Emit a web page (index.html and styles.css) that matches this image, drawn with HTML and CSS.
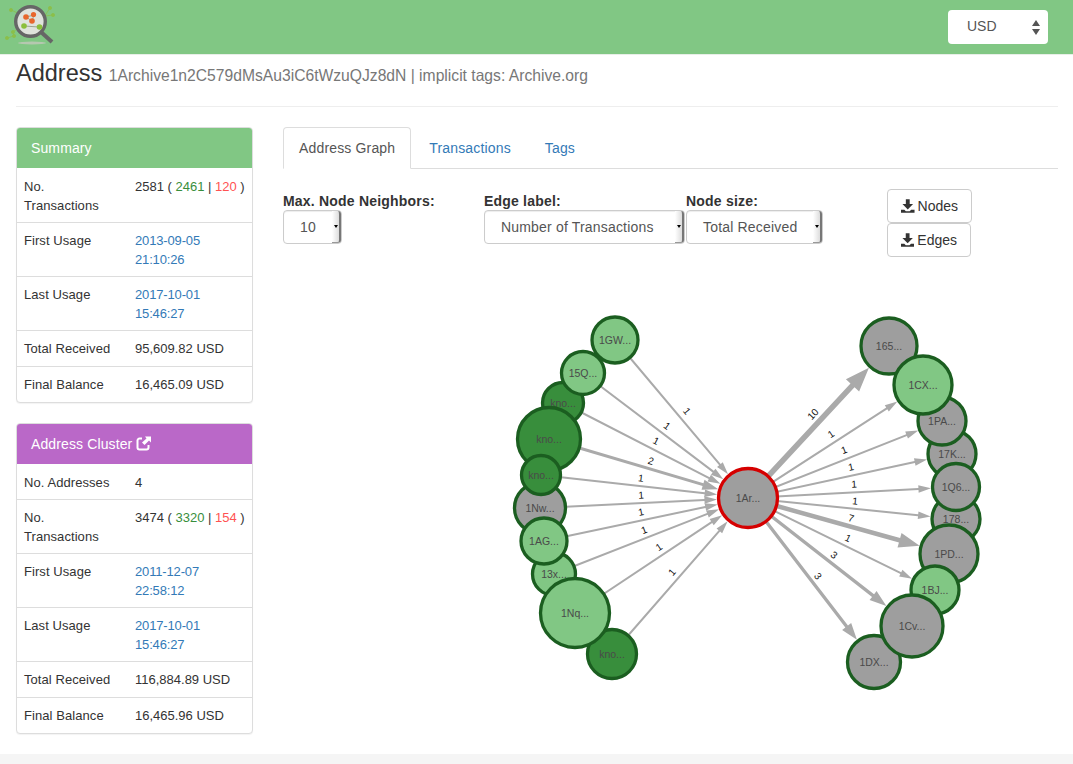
FILE: index.html
```html
<!DOCTYPE html>
<html lang="en">
<head>
    <meta charset="UTF-8">
    <title>Address</title>
    <link rel="stylesheet" href="styles.css">
</head>

<body>
    <div class="topbar">
        <svg class="logo" width="56" height="46" viewBox="0 0 56 46">
            <g stroke="#8bbf4a" stroke-width="0.8" fill="#8bbf4a">
                <path d="M11 10L22 15M50 8L44 17M53 15L45 16M7 38L14 36L13 32L20 27" fill="none"/>
                <circle cx="11" cy="10" r="1.6"/>
                <circle cx="50" cy="8" r="1.6"/>
                <circle cx="53" cy="15" r="1.6"/>
                <circle cx="13" cy="32" r="1.6"/>
                <circle cx="14" cy="36" r="1.6"/>
                <circle cx="7" cy="38" r="1.6"/>
            </g>
            <ellipse cx="32" cy="43" rx="14" ry="1.5" fill="#b5c8b0"/>
            <path d="M41 32L52 42" stroke="#666" stroke-width="4"/>
            <circle cx="30.500" cy="21.500" r="14.800" fill="#dfe3dc" stroke="#666" stroke-width="3.400"/>
            <path d="M26 17L34 15M26 17L32 21M34 15L32 21M24 26L39 27" stroke="#9aa58f" stroke-width="1"/>
            <circle cx="26" cy="17" r="2.8" fill="#e8672c"/>
            <circle cx="33.500" cy="14.500" r="2.6" fill="#e8672c"/>
            <circle cx="32" cy="21" r="2.8" fill="#e8672c"/>
            <circle cx="24" cy="26" r="2.8" fill="#8bbf3a"/>
            <circle cx="39.500" cy="27" r="2.8" fill="#8bbf3a"/>
        </svg>
        <div class="currency">
            <span>USD</span>
            <svg width="8" height="15" viewBox="0 0 8 15">
                <path d="M4 0L8 6H0ZM0 9H8L4 15Z" fill="#555"/>
            </svg>
        </div>
    </div>

    <div class="page">
        <h1 class="page-title">Address <small>1Archive1n2C579dMsAu3iC6tWzuQJz8dN | implicit tags: Archive.org</small></h1>
        <hr class="rule">

        <div class="columns">
            <div class="sidebar">
                <div class="panel">
                    <div class="panel-head green">Summary</div>
                    <table class="info">
                        <tr><td>No. Transactions</td><td>2581 ( <span class="in">2461</span> | <span class="out">120</span> )</td></tr>
                        <tr><td>First Usage</td><td><a href="#">2013-09-05 21:10:26</a></td></tr>
                        <tr><td>Last Usage</td><td><a href="#">2017-10-01 15:46:27</a></td></tr>
                        <tr><td>Total Received</td><td>95,609.82 USD</td></tr>
                        <tr><td>Final Balance</td><td>16,465.09 USD</td></tr>
                    </table>
                </div>

                <div class="panel">
                    <div class="panel-head purple">Address Cluster
                        <svg class="ext" width="15" height="15" viewBox="0 0 15 15">
                            <path d="M6 2.500H3.500A2 2 0 0 0 1.500 4.500V11.500A2 2 0 0 0 3.500 13.500H10.500A2 2 0 0 0 12.500 11.500V9" fill="none" stroke="#fff" stroke-width="2"/>
                            <path d="M9 0.500H15V6.500L13 4.500L8.500 9L6 6.500L10.500 2.500Z" fill="#fff"/>
                        </svg>
                    </div>
                    <table class="info">
                        <tr><td>No. Addresses</td><td>4</td></tr>
                        <tr><td>No. Transactions</td><td>3474 ( <span class="in">3320</span> | <span class="out">154</span> )</td></tr>
                        <tr><td>First Usage</td><td><a href="#">2011-12-07 22:58:12</a></td></tr>
                        <tr><td>Last Usage</td><td><a href="#">2017-10-01 15:46:27</a></td></tr>
                        <tr><td>Total Received</td><td>116,884.89 USD</td></tr>
                        <tr><td>Final Balance</td><td>16,465.96 USD</td></tr>
                    </table>
                </div>
            </div>

            <div class="main">
                <ul class="tabs">
                    <li class="active"><a href="#">Address Graph</a></li>
                    <li><a href="#">Transactions</a></li>
                    <li><a href="#">Tags</a></li>
                </ul>

                <div class="controls">
                    <div class="field field-neighbors">
                        <label>Max. Node Neighbors:</label>
                        <div class="select select-small"><span class="select-text">10</span><span class="select-arrow"></span></div>
                    </div>
                    <div class="field field-edge">
                        <label>Edge label:</label>
                        <div class="select select-edge"><span class="select-text">Number of Transactions</span><span class="select-arrow"></span></div>
                    </div>
                    <div class="field field-size">
                        <label>Node size:</label>
                        <div class="select select-size"><span class="select-text">Total Received</span><span class="select-arrow"></span></div>
                    </div>
                    <div class="downloads">
                        <button class="btn btn-nodes">
                            <svg width="14" height="14" viewBox="0 0 14 14"><path d="M5 0H9V5H12.500L7 10.500L1.500 5H5ZM0 11H3.500L5 12.500H9L10.500 11H14V14H0Z" fill="#333"/></svg>
                            Nodes
                        </button>
                        <button class="btn btn-edges">
                            <svg width="14" height="14" viewBox="0 0 14 14"><path d="M5 0H9V5H12.500L7 10.500L1.500 5H5ZM0 11H3.500L5 12.500H9L10.500 11H14V14H0Z" fill="#333"/></svg>
                            Edges
                        </button>
                    </div>
                </div>

                <svg id="graph" class="graph" width="775" height="430" viewBox="283 290 775 430"></svg>
            </div>
        </div>
    </div>

    <div class="footer"></div>

    <script src="graph.js"></script>
</body>

</html>
```

FILE: styles.css
```css
* {
    box-sizing: border-box;
}

body {
    margin: 0;
    font-family: "Liberation Sans", Arial, sans-serif;
    font-size: 14px;
    line-height: 1.42857;
    color: #333;
    background-color: #fff;
}

a {
    color: #337ab7;
    text-decoration: none;
}

/* top bar */
.topbar {
    height: 55px;
    padding: 0 25px 0 0;
    display: flex;
    justify-content: space-between;
    align-items: center;
    background-color: #81c784;
    border-bottom: 1px solid #e8efe8;
}

.logo {
    display: block;
    align-self: flex-start;
}

.currency {
    width: 100px;
    height: 34px;
    padding: 0 8px 0 19px;
    display: flex;
    justify-content: space-between;
    align-items: center;
    background-color: #fff;
    border-radius: 4px;
    color: #555;
}

/* page */
.page {
    padding: 0 15px 0 16px;
}

.page-title {
    margin: 0;
    padding-top: 2px;
    font-size: 23.5px;
    font-weight: 500;
    line-height: 32px;
    color: #333;
}

.page-title small {
    font-size: 15.66px;
    font-weight: 400;
    color: #777;
}

.rule {
    margin: 14px 0 20px;
    border: 0;
    border-top: 1px solid #eee;
}

.columns {
    display: flex;
    gap: 30px;
}

.sidebar {
    width: 237px;
    flex: none;
}

.panel {
    margin-bottom: 20px;
    background-color: #fff;
    border: 1px solid #ddd;
    border-radius: 4px;
    box-shadow: 0 1px 1px rgba(0, 0, 0, .05);
    overflow: hidden;
}

.panel-head {
    height: 41px;
    margin: -1px -1px 0;
    padding: 11px 15px 9px;
    font-size: 14px;
    line-height: 20px;
    letter-spacing: .12px;
    color: #fff;
}

.green {
    background-color: #81c784;
}

.purple {
    background-color: #ba68c8;
}

.ext {
    vertical-align: -2px;
}

.info {
    width: 100%;
    border-collapse: collapse;
    table-layout: fixed;
    font-size: 13px;
}

.info td {
    padding: 9px 8px 7px;
    line-height: 18.57px;
    vertical-align: top;
    border-top: 1px solid #ddd;
}

.info tr:first-child td {
    border-top-color: transparent;
}

.info td:first-child {
    width: 110px;
    padding-left: 7px;
    letter-spacing: .07px;
}

.info td:last-child {
    padding-right: 2px;
}

.info a {
    letter-spacing: -.15px;
}

.in {
    color: #388e3c;
}

.out {
    color: #ff5252;
}

/* tabs */
.main {
    flex: 1;
    min-width: 0;
}

.tabs {
    height: 42px;
    margin: 0;
    padding: 0;
    display: flex;
    list-style: none;
    letter-spacing: .16px;
    border-bottom: 1px solid #ddd;
}

.tabs li a {
    display: block;
    height: 42px;
    padding: 11px 15px 9px;
    margin-right: 2px;
    border: 1px solid transparent;
    border-radius: 4px 4px 0 0;
}

.tabs li.active a {
    color: #555;
    background-color: #fff;
    border-color: #ddd #ddd #fff;
}

/* graph controls */
.controls {
    display: flex;
    padding-top: 20px;
}

.field label {
    display: block;
    height: 21px;
    padding-top: 2px;
    font-weight: 700;
    line-height: 20px;
    letter-spacing: .2px;
    white-space: nowrap;
}

.field-neighbors {
    width: 201px;
}

.field-edge {
    width: 202px;
}

.field-size {
    width: 201px;
}

.select {
    height: 34px;
    display: flex;
    color: #555;
    background-color: #fff;
    border: 1px solid #ccc;
    border-radius: 4px;
    box-shadow: inset 0 1px 1px rgba(0, 0, 0, .075);
}

.select-text {
    flex: 1;
    padding-left: 16px;
    line-height: 32px;
    letter-spacing: .18px;
    white-space: nowrap;
}

.select-arrow {
    width: 9px;
    flex: none;
    display: flex;
    align-items: center;
    justify-content: center;
    background: linear-gradient(to right, #fff, #ddd);
    border-right: 2px solid #777;
    border-bottom: 1px solid #999;
    border-radius: 0 3px 3px 0;
}

.select-arrow::after {
    content: "";
    border-top: 3px solid #000;
    border-left: 2.5px solid transparent;
    border-right: 2.5px solid transparent;
}

.select-small {
    width: 59px;
}

.select-edge {
    width: 201px;
}

.select-size {
    width: 137px;
}

.downloads {
    display: flex;
    flex-direction: column;
    align-items: flex-start;
}

.btn {
    height: 34px;
    padding: 0 13px;
    display: flex;
    align-items: center;
    gap: 3px;
    font-family: inherit;
    font-size: 14px;
    color: #333;
    background-color: #fff;
    border: 1px solid #ccc;
    border-radius: 4px;
}

.btn-nodes {
    width: 85px;
}

.btn-edges {
    width: 84px;
}

.graph {
    display: block;
    margin-top: 34px;
}

.edge {
    fill: #aaa;
}

.edge-label {
    font-size: 10px;
    fill: #111;
    text-anchor: middle;
}

.node {
    stroke: #1b5e20;
    stroke-width: 3.3px;
}

.node-center {
    stroke: #d50000;
}

.node-label {
    font-size: 10.5px;
    fill: #4a4a4a;
    text-anchor: middle;
}

.footer {
    height: 10px;
    background-color: #f5f5f5;
}
```

FILE: graph.js
```js
var LIGHT = "#81c784", DARK = "#388e3c", GRAY = "#9e9e9e";
var CENTER = { x: 748, y: 497, r: 31 };

// t label, x y r position and size, c colour, w edge width, e edge label, lx ly where it sits
// in: true means the edge points at the centre node
var nodes = [
    { t: "1GW...", x: 615, y: 339, r: 24.5, c: LIGHT, w: 2, e: "1", lx: 687, ly: 410, in: true },
    { t: "kno...", x: 563, y: 402, r: 22, c: DARK, w: 2, e: "1", lx: 656, ly: 440, in: true },
    { t: "15Q...", x: 583, y: 372, r: 23, c: LIGHT, w: 2, e: "1", lx: 667, ly: 425, in: true },
    { t: "kno...", x: 549, y: 438, r: 33, c: DARK, w: 3, e: "2", lx: 651, ly: 460, in: true },
    { t: "1Nw...", x: 540, y: 507, r: 27, c: GRAY, w: 2, e: "1", lx: 641, ly: 494, in: true },
    { t: "kno...", x: 541, y: 474, r: 21, c: DARK, w: 2, e: "1", lx: 641, ly: 477, in: true },
    { t: "13x...", x: 554, y: 573, r: 23, c: LIGHT, w: 2, e: "1", lx: 644, ly: 529, in: true },
    { t: "1AG...", x: 544, y: 540, r: 24.5, c: LIGHT, w: 2, e: "1", lx: 641, ly: 511, in: true },
    { t: "kno...", x: 612, y: 653, r: 26, c: DARK, w: 2, e: "1", lx: 672, ly: 571, in: true },
    { t: "1Nq...", x: 575, y: 612, r: 36, c: LIGHT, w: 2, e: "1", lx: 659, ly: 546, in: true },
    { t: "165...", x: 889, y: 345, r: 29.5, c: GRAY, w: 5.5, e: "10", lx: 813, ly: 413 },
    { t: "17K...", x: 952, y: 453, r: 25.5, c: GRAY, w: 2, e: "1", lx: 851, ly: 466 },
    { t: "1PA...", x: 942, y: 420, r: 25.5, c: GRAY, w: 2, e: "1", lx: 844, ly: 449 },
    { t: "1CX...", x: 923, y: 384, r: 30.5, c: LIGHT, w: 2, e: "1", lx: 831, ly: 433 },
    { t: "178...", x: 956, y: 518, r: 25.5, c: GRAY, w: 2, e: "1", lx: 855, ly: 500 },
    { t: "1Q6...", x: 956, y: 486, r: 25, c: GRAY, w: 2, e: "1", lx: 854, ly: 483 },
    { t: "1PD...", x: 949, y: 553, r: 30.5, c: GRAY, w: 4.5, e: "7", lx: 851, ly: 517 },
    { t: "1BJ...", x: 935, y: 589, r: 25.5, c: LIGHT, w: 2, e: "1", lx: 848, ly: 537 },
    { t: "1DX...", x: 874, y: 661, r: 28, c: GRAY, w: 3.3, e: "3", lx: 818, ly: 575 },
    { t: "1Cv...", x: 912, y: 625, r: 32.5, c: GRAY, w: 3.3, e: "3", lx: 834, ly: 554 }
];

var svg = document.getElementById("graph");

function add(tag, attrs, text) {
    var el = document.createElementNS("http://www.w3.org/2000/svg", tag);
    for (var k in attrs) {
        el.setAttribute(k, attrs[k]);
    }
    if (text) {
        el.textContent = text;
    }
    svg.appendChild(el);
    return el;
}

// edges first so that the nodes cover their ends
nodes.forEach(function (n) {
    var from = n.in ? n : CENTER;
    var to = n.in ? CENTER : n;
    var dx = to.x - from.x, dy = to.y - from.y;
    var len = Math.sqrt(dx * dx + dy * dy);
    var ux = dx / len, uy = dy / len;

    var tipX = to.x - ux * to.r, tipY = to.y - uy * to.r;
    var headLen = 3.3 * n.w + 6, headW = 3 * n.w + 1.5;
    var baseX = tipX - ux * headLen, baseY = tipY - uy * headLen;
    var px = -uy, py = ux;

    add("polygon", {
        "class": "edge",
        points: [
            from.x + px * n.w / 2, from.y + py * n.w / 2,
            baseX + px * n.w / 2, baseY + py * n.w / 2,
            baseX + px * headW / 2, baseY + py * headW / 2,
            tipX, tipY,
            baseX - px * headW / 2, baseY - py * headW / 2,
            baseX - px * n.w / 2, baseY - py * n.w / 2,
            from.x - px * n.w / 2, from.y - py * n.w / 2
        ].join(" ")
    });

    var angle = Math.atan(dy / dx) * 180 / Math.PI;
    add("text", {
        "class": "edge-label",
        x: n.lx,
        y: n.ly + 3.5,
        transform: "rotate(" + angle + " " + n.lx + " " + n.ly + ")"
    }, n.e);
});

function drawNode(n, extra) {
    add("circle", {
        "class": "node" + (extra || ""),
        cx: n.x,
        cy: n.y,
        r: n.r - 1.5,
        fill: n.c
    });
    add("text", { "class": "node-label", x: n.x, y: n.y + 4 }, n.t);
}

nodes.forEach(function (n) {
    drawNode(n);
});
drawNode({ t: "1Ar...", x: CENTER.x, y: CENTER.y, r: 31, c: GRAY }, " node-center");
```
